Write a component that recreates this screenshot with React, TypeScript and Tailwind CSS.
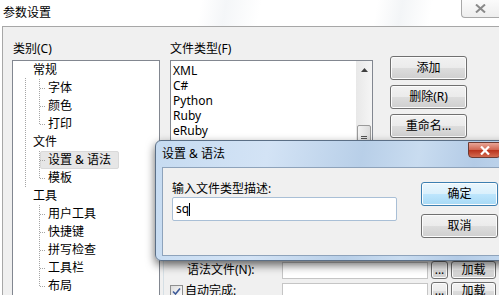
import React from "react";

const FONT = { fontFamily: '"Noto Sans", "Noto Sans CJK SC", sans-serif' };

const treeRows: { label: string; level: number; selected?: boolean }[] = [
  { label: "常规", level: 0 },
  { label: "字体", level: 1 },
  { label: "颜色", level: 1 },
  { label: "打印", level: 1 },
  { label: "文件", level: 0 },
  { label: "设置 & 语法", level: 1, selected: true },
  { label: "模板", level: 1 },
  { label: "工具", level: 0 },
  { label: "用户工具", level: 1 },
  { label: "快捷键", level: 1 },
  { label: "拼写检查", level: 1 },
  { label: "工具栏", level: 1 },
  { label: "布局", level: 1 },
];

const fileTypes = ["XML", "C#", "Python", "Ruby", "eRuby"];

function WinButton({ children, className = "" }: { children: React.ReactNode; className?: string }) {
  return (
    <div
      className={`flex items-center justify-center rounded-[3px] border border-[#707070] bg-[linear-gradient(#f2f2f2,#ebebeb_50%,#dddddd_50%,#cfcfcf)] text-[12px] text-black shadow-[inset_0_0_0_1px_#fcfcfc] ${className}`}
    >
      {children}
    </div>
  );
}

function TreeLines() {
  const c = "#a5a5a5";
  const d = "1 1";
  const kids = (ys: number[], from: number) => (
    <>
      <line x1={26.5} y1={from} x2={26.5} y2={ys[ys.length - 1]} stroke={c} strokeDasharray={d} />
      {ys.map((y) => (
        <line key={y} x1={27} y1={y + 0.5} x2={33} y2={y + 0.5} stroke={c} strokeDasharray={d} />
      ))}
    </>
  );
  return (
    <svg className="absolute inset-0 pointer-events-none" width="146" height="240">
      <line x1={12.5} y1={17} x2={12.5} y2={127} stroke={c} strokeDasharray={d} />
      {kids([27, 45, 63], 18)}
      {kids([99, 117], 90)}
      {kids([153, 171, 189, 207, 225], 144)}
    </svg>
  );
}

function CheckBox() {
  return (
    <div className="w-[13px] h-[13px] border border-[#8e8f8f] bg-[linear-gradient(135deg,#dcdcdc,#ffffff)] flex items-center justify-center">
      <svg width="9" height="9" viewBox="0 0 9 9">
        <path d="M1 4.5 L3.5 7 L8 1.5" fill="none" stroke="#3d5a99" strokeWidth="1.6" />
      </svg>
    </div>
  );
}

export default function App() {
  return (
    <div className="relative w-[499px] h-[295px] overflow-hidden bg-white text-black text-[12px]" style={FONT}>
      {/* main window title */}
      <div className="h-[26px] flex justify-between bg-[linear-gradient(100deg,#ffffff_40%,#f4f6f8_45%,#ffffff_52%,#ffffff_75%,#f3f5f7_80%,#ffffff_86%)]">
        <div className="pl-[3px] pt-[5px] leading-[16px]">参数设置</div>
        <div className="w-[38px] h-[18px] border-l border-b border-[#a8a8a8] rounded-bl-[4px] bg-[linear-gradient(#fbfbfb,#eeeeee)] flex items-center justify-center">
          <svg width="11" height="9" viewBox="0 0 11 9">
            <path d="M1 0.5 L10 8.5 M10 0.5 L1 8.5" stroke="#8a8a8a" strokeWidth="2" />
          </svg>
        </div>
      </div>

      {/* main window body */}
      <div className="ml-[2px] h-[269px] border-l border-t border-[#a7a7a7] bg-[#f0f0f0] pl-[9px] pt-[15px] flex">
        {/* category tree */}
        <div className="w-[148px] flex flex-col">
          <div className="pl-[1px] h-[14px] leading-[14px]">类别(C)</div>
          <div className="mt-[4px] h-[260px] border border-[#828790] bg-white relative">
            <TreeLines />
            {treeRows.map((r) => (
              <div
                key={r.label}
                className={`h-[18px] flex items-center ${r.level === 0 ? "pl-[20px]" : "pl-[27px]"}`}
              >
                {r.level === 0 ? (
                  <span className="leading-[18px]">{r.label}</span>
                ) : (
                  <span
                    className={`h-[18px] leading-[16px] px-[7px] border ${
                      r.selected ? "bg-[#e6e6e6] border-[#d9d9d9] rounded-[2px]" : "border-transparent"
                    }`}
                  >
                    {r.label}
                  </span>
                )}
              </div>
            ))}
          </div>
        </div>

        {/* right side */}
        <div className="ml-[3px] flex-1 flex flex-col">
          <div className="pl-[7px] flex">
            <div className="w-[203px] flex flex-col">
              <div className="h-[14px] leading-[14px]">文件类型(F)</div>
              <div className="mt-[4px] h-[98px] border border-[#828790] bg-white flex overflow-hidden">
                <div className="flex-1 pl-[2px] pt-[2px]">
                  {fileTypes.map((t) => (
                    <div key={t} className="h-[15px] leading-[15px]">
                      {t}
                    </div>
                  ))}
                </div>
                <div className="w-[16px] bg-[linear-gradient(90deg,#e8e8e8,#f5f5f5)] flex flex-col items-center">
                  <div className="h-[17px] flex items-center justify-center">
                    <svg width="7" height="4" viewBox="0 0 7 4">
                      <path d="M0 4 L3.5 0 L7 4 Z" fill="#404040" />
                    </svg>
                  </div>
                  <div className="mt-[47px] w-[14px] h-[30px] rounded-[2px] border border-[#9a9a9a] bg-[linear-gradient(90deg,#f3f3f3,#dcdcdc)] flex flex-col items-center pt-[10px] gap-[1px]">
                    <div className="w-[6px] h-[1px] bg-[#555]" />
                    <div className="w-[6px] h-[1px] bg-[#555]" />
                    <div className="w-[6px] h-[1px] bg-[#555]" />
                  </div>
                </div>
              </div>
            </div>
            <div className="ml-[17px] pt-[14px] flex flex-col gap-[5px]">
              <WinButton className="w-[77px] h-[24px]">添加</WinButton>
              <WinButton className="w-[77px] h-[24px]">删除(R)</WinButton>
              <WinButton className="w-[77px] h-[24px]">重命名...</WinButton>
            </div>
          </div>

          {/* lower settings group */}
          <div className="mt-[8px] flex-1 border-l border-t border-[#d5dfe5] rounded-tl-[3px] pl-[6px] pt-[94px] flex flex-col gap-[3px]">
            <div className="flex items-center h-[18px]">
              <div className="w-[112px] pl-[17px]">语法文件(N):</div>
              <div className="w-[146px] h-[17px] border border-[#c5c5c5] bg-white" />
              <WinButton className="ml-[3px] w-[17px] h-[18px] leading-[8px]">...</WinButton>
              <WinButton className="ml-[3px] w-[45px] h-[18px]">加载</WinButton>
            </div>
            <div className="flex items-center h-[18px]">
              <div className="w-[112px] flex items-center gap-[2px]">
                <CheckBox />
                <span>自动完成:</span>
              </div>
              <div className="w-[146px] h-[17px] border border-[#c5c5c5] bg-white" />
              <WinButton className="ml-[3px] w-[17px] h-[18px]">...</WinButton>
              <WinButton className="ml-[3px] w-[45px] h-[18px]">加载</WinButton>
            </div>
          </div>
        </div>
      </div>

      {/* modal dialog */}
      <div className="absolute left-[155px] top-[140px] w-[360px] h-[121px] border border-[#5b6f86] rounded-[6px] bg-[linear-gradient(100deg,#c6dbf1,#d3e3f5_30%,#b8cfe8_55%,#c9dcf0_70%,#b3cbe6_85%,#c4d9ef)] shadow-[0_4px_10px_rgba(0,0,0,0.6)] flex flex-col pl-[6px]">
        <div className="h-[26px] flex items-center leading-[16px]">设置 &amp; 语法</div>
        <div className="absolute left-[312px] top-[1px] w-[33px] h-[16px] rounded-b-[4px] border border-[#6b3a33] bg-[linear-gradient(#e9a697,#d0644f_50%,#b8311b_51%,#d36a50)] flex items-center justify-center">
          <svg width="10" height="9" viewBox="0 0 10 9">
            <path d="M1 0.5 L9 8.5 M9 0.5 L1 8.5" stroke="#ffffff" strokeWidth="2.2" />
          </svg>
        </div>
        <div className="h-[89px] border border-[#8ea3bb] bg-[#f0f0f0] pl-[9px] pt-[13px] flex">
          <div className="w-[225px] flex flex-col">
            <div className="h-[16px] leading-[16px]">输入文件类型描述:</div>
            <div className="h-[24px] border border-[#a9bfd6] rounded-[2px] bg-white flex items-center pl-[3px]">
              <span>sq</span>
              <span className="w-[1px] h-[13px] bg-black" />
            </div>
          </div>
          <div className="ml-[24px] mt-[1px] flex flex-col gap-[8px]">
            <WinButton className="w-[77px] h-[24px] !border-[#3c7fb1] !bg-[linear-gradient(#eaf6fd,#d9f0fc_50%,#bee6fd_50%,#a7d9f5)] shadow-[inset_0_0_0_1px_#9ee0fb]">
              确定
            </WinButton>
            <WinButton className="w-[77px] h-[24px]">取消</WinButton>
          </div>
        </div>
      </div>
    </div>
  );
}
